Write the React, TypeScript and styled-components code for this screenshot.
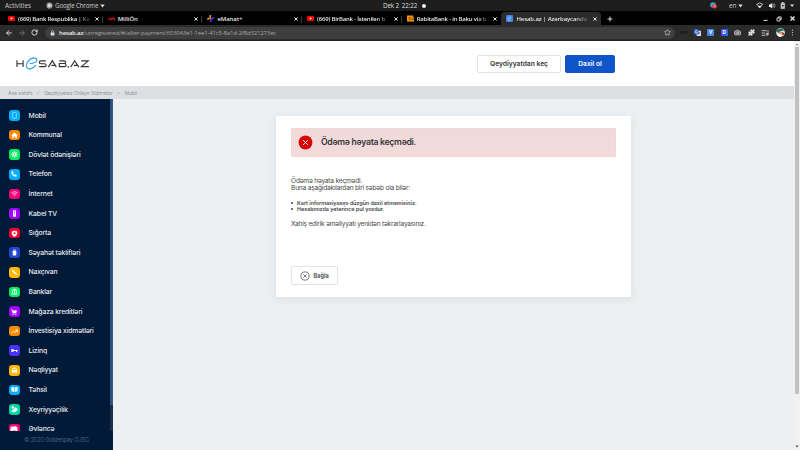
import React from 'react';
import styled, { createGlobalStyle, css } from 'styled-components';
import {
  Smartphone, Settings, Phone, Wifi, Luggage, Landmark, ShoppingCart, TrendingUp,
  BookOpen, HandCoins, Gamepad2, ArrowLeft, ArrowRight, RotateCw, Star, Puzzle,
  ListMusic, Camera, Infinity as InfinityIcon,
} from 'lucide-react';

const Global = createGlobalStyle`
  * { box-sizing: border-box; }
  body { margin: 0; overflow: hidden; }
  #root { width: 800px; height: 450px; }
  svg { display: block; flex: none; }
`;

const Screen = styled.div`
  width: 800px;
  height: 450px;
  display: flex;
  flex-direction: column;
  overflow: hidden;
  font-family: Inter, "Liberation Sans", sans-serif;
  white-space: nowrap;
`;

const SystemBar = styled.div`
  height: 11px;
  flex: none;
  background: #1d1d1d;
  color: #c9c9c9;
  display: grid;
  grid-template-columns: 383px 1fr 94px;
  align-items: center;
  font: 6.3px/11px "Open Sans", "Noto Sans", sans-serif;
`;
const SystemLeft = styled.div`
  display: flex;
  align-items: center;
  padding-left: 5px;
`;
const Activities = styled.span`
  width: 41px;
`;
const AppName = styled.span`
  margin: 0 2px 0 2px;
  letter-spacing: -0.2px;
`;
const Clock = styled.div`
  display: flex;
  align-items: center;
  gap: 5px;
  color: #dedede;
  letter-spacing: -0.15px;
`;
const Dot = styled.i`
  width: 4px;
  height: 4px;
  border-radius: 50%;
  background: #f2f2f2;
`;
const Tray = styled.div`
  display: flex;
  align-items: center;
  padding-left: 4px;
`;
const TrayText = styled.span`
  margin: 0 2px 0 12px;
`;

const TabStrip = styled.div`
  height: 14px;
  flex: none;
  background: #000;
  display: flex;
  padding: 1px 0 0 3px;
`;
const TabBox = styled.div<{ $active?: boolean; $divided?: boolean }>`
  width: 99.7px;
  height: 13px;
  flex: none;
  display: flex;
  align-items: center;
  padding: 0 4px 0 5px;
  border-radius: 4px 4px 0 0;
  color: #e4e4e4;
  font: 600 6px/12px "Open Sans", "Noto Sans", sans-serif;
  background: ${p => (p.$active ? '#2b2b2b' : 'transparent')};
  ${p => p.$divided && css`
    background: linear-gradient(#3a3a3a, #3a3a3a) right 4px / 1px 7px no-repeat;
  `}
`;
const TabTitle = styled.span<{ $fade?: boolean; $spacing: number }>`
  width: 75px;
  margin: 0 1.5px 0 3px;
  flex: none;
  letter-spacing: ${p => p.$spacing}px;
  ${p => p.$fade && css`mask-image: linear-gradient(90deg, #000 78%, transparent 100%);`}
`;
const StripSpacer = styled.div`
  flex: 1;
`;
const PlusSlot = styled.div`
  display: flex;
  align-items: center;
  padding-left: 6px;
`;
const WindowControls = styled.div`
  display: flex;
  align-items: center;
  gap: 8px;
  padding-right: 5px;
`;

const Toolbar = styled.div`
  height: 16px;
  flex: none;
  background: #2b2b2b;
  border-bottom: 1px solid #202124;
  display: flex;
  align-items: center;
  padding: 0 6px 0 5px;
  color: #d4d4d4;
`;
const NavButtons = styled.div`
  width: 40px;
  display: flex;
  align-items: center;
  gap: 5px;
`;
const AddressBar = styled.div`
  width: 630px;
  height: 12px;
  flex: none;
  border-radius: 6px;
  background: #3e3e3e;
  display: flex;
  align-items: center;
  padding: 0 4px 0 5px;
  font: 6.1px/12px "Open Sans", "Noto Sans", sans-serif;
  color: #a2a2a2;
`;
const Url = styled.span`
  flex: 1;
  margin-left: 4px;
  letter-spacing: -0.21px;
`;
const Host = styled.b`
  font-weight: 600;
  color: #ececec;
`;
const Extensions = styled.div`
  flex: 1;
  display: flex;
  justify-content: space-between;
  align-items: center;
  padding-left: 5px;
`;
const Extension = styled.span<{ $bg: string }>`
  width: 7px;
  height: 7px;
  border-radius: 1px;
  background: ${p => p.$bg};
  color: #fff;
  font: 700 5px/7px "Open Sans", sans-serif;
  text-align: center;
`;

const Viewport = styled.div`
  flex: 1;
  display: flex;
  min-height: 0;
`;
const Page = styled.div`
  width: 794px;
  display: flex;
  flex-direction: column;
`;
const ScrollTrack = styled.div`
  width: 6px;
  background: #f1f1f1;
  display: flex;
  flex-direction: column;
  align-items: center;
  padding: 2px 0;
`;
const ScrollThumb = styled.div`
  width: 4px;
  height: 347px;
  margin: 1px 0 auto;
  background: #c1c1c1;
`;

const SiteHeader = styled.header`
  height: 45px;
  flex: none;
  background: #fff;
  display: flex;
  align-items: flex-start;
  padding: 13.5px 0 0 16px;
`;
const HeaderButtons = styled.div`
  display: flex;
  gap: 4px;
  margin: 0.5px 0 0 386px;
`;
const Button = styled.button<{ $primary?: boolean }>`
  width: ${p => (p.$primary ? 50 : 84)}px;
  height: 18px;
  padding: 0 0 1px;
  border-radius: 2px;
  border: 1px solid ${p => (p.$primary ? '#0f55c9' : '#e3e4e6')};
  background: ${p => (p.$primary ? '#0f55c9' : '#fff')};
  color: ${p => (p.$primary ? '#fff' : '#343434')};
  font: 600 6.7px/14px Inter, sans-serif;
`;
const Breadcrumb = styled.nav`
  height: 13px;
  flex: none;
  background: #dce0e3;
  display: flex;
  align-items: center;
  padding-left: 8px;
  color: #8f9498;
  font-size: 5px;
  letter-spacing: -0.13px;
`;
const Crumb = styled.span<{ $w?: number; $spacing?: number }>`
  width: ${p => (p.$w ? `${p.$w}px` : 'auto')};
  letter-spacing: ${p => p.$spacing ?? -0.13}px;
`;
const Chevron = styled.span`
  width: 7px;
`;

const Body = styled.div`
  flex: 1;
  min-height: 0;
  display: flex;
  background: #ecf0f3;
`;
const Sidebar = styled.aside`
  width: 112.7px;
  flex: none;
  background: #021a38;
  display: flex;
  flex-direction: column;
`;
const MenuArea = styled.div`
  height: 332px;
  display: flex;
  justify-content: space-between;
  overflow: hidden;
`;
const Menu = styled.ul`
  list-style: none;
  margin: 0;
  padding: 6.8px 0 0 9px;
`;
const MenuItem = styled.li`
  height: 19.6px;
  display: flex;
  align-items: center;
  gap: 9px;
  color: #e6eaef;
  font-size: 6.8px;
  line-height: 10px;
  font-weight: 500;
`;
const Badge = styled.span<{ $color: string }>`
  width: 10.6px;
  height: 10.6px;
  flex: none;
  border-radius: 3.2px;
  background: ${p => p.$color};
  color: #fff;
  display: grid;
  place-items: center;
`;
const MenuText = styled.span`
  letter-spacing: -0.15px;
`;
const MenuTrack = styled.div`
  width: 2.4px;
  background: #1a2f4a;
`;
const MenuThumb = styled.div`
  height: 306px;
  background: linear-gradient(90deg, #244973, #34608f);
`;
const Copyright = styled.footer`
  padding-left: 24px;
  color: #4c6280;
  font-size: 5.7px;
  line-height: 18px;
  letter-spacing: -0.17px;
`;

const Card = styled.main`
  width: 354.6px;
  height: 181px;
  margin: 17px 0 0 163.4px;
  padding: 12px 15px 0;
  background: #fff;
  border-radius: 1px;
  box-shadow: 0 2px 9px rgba(70, 90, 110, 0.11);
  color: #484848;
  font-size: 6.6px;
  line-height: 7px;
  letter-spacing: -0.21px;
`;
const Alert = styled.div`
  height: 29px;
  border: 1px solid #f0d6d7;
  border-radius: 1px;
  background: #f3dada;
  display: flex;
  align-items: center;
  gap: 8.4px;
  padding-left: 5.5px;
`;
const AlertTitle = styled.h1`
  margin: 0 0 1px;
  color: #363636;
  font-size: 8.7px;
  line-height: 12px;
  font-weight: 600;
  letter-spacing: -0.3px;
`;
const Intro = styled.p`
  margin: 21px 0 0;
`;
const Reasons = styled.ul`
  list-style: none;
  margin: 8px 0 0;
  padding: 0;
  font-size: 5.4px;
  line-height: 6px;
  font-weight: 600;
`;
const Reason = styled.li<{ $spacing: number }>`
  display: flex;
  align-items: center;
  gap: 4px;
  letter-spacing: ${p => p.$spacing}px;
  &::before {
    content: '';
    width: 2px;
    height: 2px;
    border-radius: 50%;
    background: #444;
  }
`;
const Retry = styled.p`
  margin: 9px 0 0;
`;
const CloseButton = styled.button`
  width: 46.5px;
  height: 19px;
  margin-top: 38px;
  padding: 0 0 0 7.5px;
  display: flex;
  align-items: center;
  gap: 4px;
  border: 1px solid #e2e3e5;
  border-radius: 2px;
  background: #fff;
  color: #5a5a5a;
  font: 700 5.6px/8px Inter, sans-serif;
`;

const Caret = () => <svg width="5" height="4" viewBox="0 0 5 4"><path d="M.3.5h4.4L2.5 3.5z" fill="#ddd" /></svg>;
const Cross = ({ s = 4 }: { s?: number }) => (
  <svg width={s} height={s} viewBox="0 0 4 4" stroke="#eee" strokeWidth=".95"><path d="M.4.4l3.2 3.2M3.6.4L.4 3.6" /></svg>
);
const YouTube = () => (
  <svg width="7" height="7" viewBox="0 0 7 7"><rect y="1" width="7" height="5" rx="1.2" fill="#f00" /><path d="M2.8 2.3v2.4l2-1.2z" fill="#fff" /></svg>
);
const MillionIcon = () => (
  <svg width="7" height="7" viewBox="0 0 7 7" fill="none" stroke="#d5121f" strokeWidth=".9"><circle cx="1.6" cy="4" r="1.1" /><path d="M3.6 5.5V3h2.8v2.5M5 3v2.5" /></svg>
);
const EManatIcon = () => (
  <svg width="7" height="7" viewBox="0 0 7 7" fill="none" strokeWidth="1.5"><path d="M3.3 0v2.9L.2 4.3" stroke="#ff8a1e" /><path d="M3.9 7V4.2l2.9-1.5" stroke="#5a3bea" /></svg>
);
const RabitaIcon = () => (
  <svg width="7" height="7" viewBox="0 0 7 7"><path d="M0 .5h6v1.3h1v4.7H0z" fill="#f90" /><path d="M4.2 2.4H2.1v2.2h2.1M7 2.9H5.2v1.6H7" stroke="#3b2500" strokeWidth=".6" fill="none" /></svg>
);
const HesabIcon = () => (
  <svg width="7" height="7" viewBox="0 0 7 7"><rect width="7" height="7" rx="1" fill="#3f83e6" /><path d="M2 4.1L5 2.7C4.5 1 2 1.7 1.7 3.8c0 2 2 2 3.3 1" fill="none" stroke="#bcd7ff" strokeWidth=".6" /></svg>
);
const ChromeIcon = () => (
  <svg width="7" height="7" viewBox="0 0 7 7"><circle cx="3.5" cy="3.5" r="3.1" fill="#a8a8a8" /><path d="M3.5 2h3M2.2 4.3L.9 2M4.8 4.3L3.5 6.6" stroke="#555" strokeWidth=".5" /><circle cx="3.5" cy="3.5" r="1.3" fill="#eee" /></svg>
);
const Lock = () => (
  <svg width="5" height="6" viewBox="0 0 5 6"><rect x=".6" y="2.4" width="3.8" height="3" rx=".3" fill="#ddd" /><path d="M1.5 2.5v-.9a1 1 0 012 0v.9" stroke="#ddd" strokeWidth=".7" fill="none" /></svg>
);
const TranslateIcon = () => (
  <svg width="7" height="7" viewBox="0 0 7 7"><rect x="2.6" y="1.8" width="4.4" height="5.2" rx=".5" fill="#dce3ec" /><path d="M0 0h4l1.3 5.3H0z" fill="#3568dc" /><path d="M3.3 2.2a1.2 1.2 0 10.2 1.2h-1" stroke="#fff" strokeWidth=".6" fill="none" /><path d="M4.8 3.4h1.8M5.7 3v.4c0 1-.5 1.7-1 2" stroke="#697b94" strokeWidth=".5" fill="none" /></svg>
);
const Avatar = () => (
  <svg width="9" height="9" viewBox="0 0 9 9"><circle cx="4.5" cy="4.5" r="4.4" fill="#dbe7df" /><path d="M.2 4C1 .2 6-.9 8.3 2.5L5 3 3.5 5z" fill="#27685a" /><circle cx="4.2" cy="4.6" r="1.5" fill="#c98e72" /><path d="M6 4l2.7 1.2L7 7.5 5.5 6z" fill="#b53e35" /><path d="M1 6.5L4 6l1 2.8C3 9 2 8.5 1 6.5z" fill="#fff" /></svg>
);

const SiteLogo = () => (
  <svg width="75" height="17" viewBox="0 0 76.2 17" preserveAspectRatio="none">
    <g fill="none" stroke="#333" strokeWidth="1.15">
      <path d="M1 5.3v6.8M7.2 5.3v6.8M1 8.7h6.2" />
      <path d="M30.3 5.9H25.4q-1.8 0-1.8 1.3T25.4 8.7h3.4q1.8 0 1.8 1.5t-1.8 1.4h-5.3" />
      <path d="M32.9 12.1l4-6.4 4.1 6.4M36 10.4h3.6" />
      <path d="M44 5.9h4.8q1.6 0 1.6 1.3t-1.6 1.3H44m4.8 0q2.1 0 2.1 1.6t-2 1.5H44V8" />
      <path d="M53.1 11.1v1.6" />
      <path d="M55.6 12.1l4-6.4 4.2 6.4M58.8 10.4h3.6" />
      <path d="M66.3 5.9h7l-6.8 5.7h7.6" />
    </g>
    <path d="M14.2 8.5c3.5.1 6.8-1.3 7-3.4.1-2.3-3.6-2.7-6.5-.8C11.6 6.2 9.5 9.9 11 12.6c1.6 2.7 6.1 1.4 9.2-2.5" fill="none" stroke="#2396e9" strokeWidth="1.05" />
    <path d="M11.4 7.5C12.3 5 15 2.8 18.3 2.6M10.9 11.2c.2 2.3 2 3.5 4.6 2.6" fill="none" stroke="#46aaf2" strokeWidth=".7" />
  </svg>
);

const PhoneIcon = () => <svg width="7" height="7" viewBox="0 0 7 7"><rect x="1.6" y=".5" width="3.8" height="6" rx=".7" fill="none" stroke="#a9e6ff" strokeWidth=".7" /><path d="M3 5.5h1" stroke="#a9e6ff" strokeWidth=".5" /></svg>;
const HomeIcon = () => <svg width="7" height="7" viewBox="0 0 7 7"><path d="M3.5.5l3.2 2.8h-.8v3H4.3V4.4H2.7v1.9H1.1v-3H.3z" fill="#fff" /></svg>;
const GearIcon = () => <svg width="7" height="7" viewBox="0 0 7 7"><circle cx="3.5" cy="3.5" r="1.6" fill="none" stroke="#fff" strokeWidth="1.3" /><path d="M3.5.3v1M3.5 5.7v1M.3 3.5h1M5.7 3.5h1M1.2 1.2l.8.8M5 5l.8.8M5.8 1.2L5 2M2 5l-.8.8" stroke="#fff" strokeWidth="1" /></svg>;
const RemoteIcon = () => <svg width="7" height="7" viewBox="0 0 7 7"><rect x="2" y=".3" width="3" height="6.4" rx=".7" fill="#fff" /><circle cx="3.5" cy="2" r=".7" fill="#a100ff" /><path d="M3 3.8h1M3 5h1" stroke="#a100ff" strokeWidth=".4" /></svg>;
const ShieldIcon = () => <svg width="7" height="7" viewBox="0 0 7 7"><path d="M3.5.4l2.7 1v2.1c0 1.6-1.2 2.6-2.7 3.2C2 6.1.8 5.1.8 3.5V1.4z" fill="#fff" /><circle cx="3.5" cy="3.3" r="1" fill="#f5002f" /></svg>;
const SuitcaseIcon = () => <svg width="7" height="7" viewBox="0 0 7 7"><rect x="1.7" y="1.7" width="3.6" height="4.7" rx=".6" fill="#fff" /><path d="M2.8 1.8V.7h1.4v1.1" stroke="#fff" strokeWidth=".6" fill="none" /></svg>;
const MapIcon = () => <svg width="7" height="7" viewBox="0 0 7 7"><path d="M.5.8l2.4.6 1 1.8 1.7.7.8 2.3-1.8-.6-1.5-1.6-1.4-.7z" fill="#fff" /></svg>;
const BankIcon = () => <svg width="7" height="7" viewBox="0 0 7 7"><path d="M.4 2.6L3.5.6l3.1 2zM.5 5.6h6v.9h-6z" fill="#fff" /><path d="M1.5 3v2.4M3.5 3v2.4M5.5 3v2.4" stroke="#fff" strokeWidth=".9" /></svg>;
const KeyIcon = () => <svg width="7" height="7" viewBox="0 0 7 7"><path d="M.3 2.2h2.1l.5.7h3.8v1.2H6V5H5v-.9H2.9l-.5.6H.3z" fill="#fff" /></svg>;
const TaxiIcon = () => <svg width="7" height="7" viewBox="0 0 7 7"><path d="M2.5.6h2v.7h.8l.9 2v2.8H5.2v-.7H1.8v.7H.8V3.3l.9-2h.8z" fill="#fff" /><path d="M1.7 3l.5-1h2.6l.5 1z" fill="#ffb800" /><circle cx="2" cy="4.3" r=".4" fill="#ffb800" /><circle cx="5" cy="4.3" r=".4" fill="#ffb800" /></svg>;
const BookIcon = () => <svg width="7" height="7" viewBox="0 0 7 7"><path d="M.4 1.3q1.6-.5 2.8.3v4.3q-1.2-.7-2.8-.3zM6.6 1.3Q5 .8 3.8 1.6v4.3q1.2-.7 2.8-.3z" fill="#fff" /></svg>;

const menu: { text: string; color: string; icon: React.ReactNode }[] = [
  { text: 'Mobil', color: '#00b0ff', icon: <PhoneIcon /> },
  { text: 'Kommunal', color: '#ff8a00', icon: <HomeIcon /> },
  { text: 'Dövlət ödənişləri', color: '#00ef62', icon: <GearIcon /> },
  { text: 'Telefon', color: '#00b0ff', icon: <Phone size={6} strokeWidth={1.5} fill="#fff" /> },
  { text: 'İnternet', color: '#ff0078', icon: <Wifi size={7} strokeWidth={3} color="#ffb3d6" /> },
  { text: 'Kabel TV', color: '#a100ff', icon: <RemoteIcon /> },
  { text: 'Sığorta', color: '#f5002f', icon: <ShieldIcon /> },
  { text: 'Səyahət təklifləri', color: '#2147d2', icon: <SuitcaseIcon /> },
  { text: 'Naxçıvan', color: '#ffb800', icon: <MapIcon /> },
  { text: 'Banklar', color: '#00ef62', icon: <BankIcon /> },
  { text: 'Mağaza kreditləri', color: '#a100ff', icon: <ShoppingCart size={6} strokeWidth={2.5} fill="#fff" /> },
  { text: 'İnvestisiya xidmətləri', color: '#ff8a00', icon: <TrendingUp size={7} strokeWidth={3} /> },
  { text: 'Lizinq', color: '#4c32ff', icon: <KeyIcon /> },
  { text: 'Nəqliyyat', color: '#ffb800', icon: <TaxiIcon /> },
  { text: 'Təhsil', color: '#00b0ff', icon: <BookIcon /> },
  { text: 'Xeyriyyəçilik', color: '#00d6a2', icon: <HandCoins size={7} strokeWidth={3} fill="#fff" /> },
  { text: 'Əyləncə', color: '#ff0078', icon: <Gamepad2 size={8} strokeWidth={1.5} fill="#fff" /> },
];

const tabs: { title: string; icon: React.ReactNode; fade?: boolean; spacing: number }[] = [
  { title: '(669) Bank Respublika | Ka', icon: <YouTube />, fade: true, spacing: -0.22 },
  { title: 'MilliÖn', icon: <MillionIcon />, spacing: -0.1 },
  { title: 'eManat+', icon: <EManatIcon />, spacing: -0.1 },
  { title: '(669) BirBank - İstənilən b', icon: <YouTube />, fade: true, spacing: -0.22 },
  { title: 'RabitaBank - in Baku via b', icon: <RabitaIcon />, fade: true, spacing: -0.22 },
  { title: 'Hesab.az | Azərbaycanda', icon: <HesabIcon />, fade: true, spacing: -0.12 },
];

export default function App() {
  return (
    <Screen>
      <Global />
      <SystemBar>
        <SystemLeft>
          <Activities>Activities</Activities>
          <ChromeIcon />
          <AppName>Google Chrome</AppName>
          <Caret />
        </SystemLeft>
        <Clock><span>Dek 2&nbsp; 22:22</span><Dot /></Clock>
        <Tray>
          <svg width="7" height="7" viewBox="0 0 7 7"><circle cx="3" cy="3" r="2.8" fill="#33a5dd" /><circle cx="4.6" cy="4.2" r="2.3" fill="#e83a35" /><path d="M4.2 3.3l.6-.3v2.3" stroke="#fff" strokeWidth=".5" fill="none" /></svg>
          <TrayText>en</TrayText>
          <Caret />
          <svg width="58" height="9" viewBox="0 0 58 9">
            <path d="M13.7 3.2q3-2.4 6 0l-3 3.8z" stroke="#e5e5e5" strokeWidth=".8" fill="none" /><path d="M15 4.8h3.4L16.7 7z" fill="#eee" />
            <path d="M26 3.5h1.3L29.3 2v5.4l-2-1.5H26z" fill="#eee" /><path d="M30.2 3q1.2 1.6 0 3.2M31.2 2.3q1.7 2.3 0 4.6" stroke="#aaa" strokeWidth=".7" fill="none" />
            <path d="M38 2.2h1V1.5h1.6v.7h1v5.3H38z" fill="#bbb" stroke="#eee" strokeWidth=".5" /><path d="M38.7 4h2.2L39.8 6z" fill="#333" />
            <path d="M47 3.4h4.2l-2.1 2.7z" fill="#ddd" />
          </svg>
        </Tray>
      </SystemBar>
      <TabStrip>
        {tabs.map((t, i) => (
          <TabBox key={t.title} $active={i === 5} $divided={i < 4}>
            {t.icon}
            <TabTitle $fade={t.fade} $spacing={t.spacing}>{t.title}</TabTitle>
            <Cross />
          </TabBox>
        ))}
        <PlusSlot><svg width="6" height="6" viewBox="0 0 6 6" stroke="#eee" strokeWidth=".9"><path d="M3 .5v5M.5 3h5" /></svg></PlusSlot>
        <StripSpacer />
        <WindowControls>
          <svg width="5" height="5" viewBox="0 0 5 5"><path d="M.5 4.4h4" stroke="#ddd" /></svg>
          <svg width="6" height="6" viewBox="0 0 6 6" fill="none" stroke="#ddd" strokeWidth=".9"><path d="M1 2h3v3H1zM2.4 2V.9h2.8v2.8H4" /></svg>
          <Cross s={5} />
        </WindowControls>
      </TabStrip>
      <Toolbar>
        <NavButtons>
          <ArrowLeft size={8} strokeWidth={3} />
          <ArrowRight size={8} strokeWidth={2.6} color="#777" />
          <RotateCw size={7} strokeWidth={3.4} />
        </NavButtons>
        <AddressBar>
          <Lock />
          <Url><Host>hesab.az</Host>/unregistered/#/after-payment/603043e1-1ee1-41c5-8a1d-2f8d321273ec</Url>
          <Star size={7} strokeWidth={2.3} color="#ccc" />
        </AddressBar>
        <Extensions>
          <InfinityIcon size={7} strokeWidth={3} color="#151515" />
          <TranslateIcon />
          <Extension $bg="#4a86e8">V</Extension>
          <Extension $bg="linear-gradient(90deg, #5d35ff, #1478ff)">D</Extension>
          <Camera size={7} strokeWidth={3} color="#bbb" fill="#777" />
          <Puzzle size={7} strokeWidth={2} fill="#ddd" color="#ddd" />
          <ListMusic size={8} strokeWidth={2.7} color="#ccc" />
          <Avatar />
          <svg width="3" height="7" viewBox="0 0 3 7" fill="#ccc"><circle cx="1.5" cy="1.2" r=".6" /><circle cx="1.5" cy="3.5" r=".6" /><circle cx="1.5" cy="5.8" r=".6" /></svg>
        </Extensions>
      </Toolbar>
      <Viewport>
        <Page>
          <SiteHeader>
            <SiteLogo />
            <HeaderButtons>
              <Button>Qeydiyyatdan keç</Button>
              <Button $primary>Daxil ol</Button>
            </HeaderButtons>
          </SiteHeader>
          <Breadcrumb>
            <Crumb $w={29} $spacing={-0.07}>Ana səhifə</Crumb><Chevron>›</Chevron>
            <Crumb $w={73.5}>Qeydiyyatsız Onlayn Xidmətlər</Crumb><Chevron>›</Chevron>
            <Crumb>Mobil</Crumb>
          </Breadcrumb>
          <Body>
            <Sidebar>
              <MenuArea>
                <Menu>
                  {menu.map(m => (
                    <MenuItem key={m.text}>
                      <Badge $color={m.color}>{m.icon}</Badge>
                      <MenuText>{m.text}</MenuText>
                    </MenuItem>
                  ))}
                </Menu>
                <MenuTrack><MenuThumb /></MenuTrack>
              </MenuArea>
              <Copyright>© 2020 Goldenpay OJSC</Copyright>
            </Sidebar>
            <Card>
              <Alert>
                <svg width="15" height="15" viewBox="0 0 15 15"><circle cx="7.5" cy="7.5" r="6.9" fill="#da0000" /><path d="M5 5l5 5M10 5l-5 5" stroke="#fff" strokeWidth=".9" /></svg>
                <AlertTitle>Ödəmə həyata keçmədi.</AlertTitle>
              </Alert>
              <Intro>Ödəmə həyata keçmədi.<br />Buna aşağıdakılardan biri səbəb ola bilər:</Intro>
              <Reasons>
                <Reason $spacing={-0.04}>Kart informasiyasını düzgün daxil etməmisiniz.</Reason>
                <Reason $spacing={-0.03}>Hesabınızda yetərincə pul yoxdur.</Reason>
              </Reasons>
              <Retry>Xahiş edirik əməliyyatı yenidən təkrarlayasınız.</Retry>
              <CloseButton>
                <svg width="10" height="10" viewBox="0 0 10 10" fill="none" stroke="#555" strokeWidth=".8"><circle cx="5" cy="5" r="4.1" /><path d="M3.3 3.3l3.4 3.4M6.7 3.3L3.3 6.7" /></svg>
                Bağla
              </CloseButton>
            </Card>
          </Body>
        </Page>
        <ScrollTrack>
          <svg width="4" height="3" viewBox="0 0 4 3"><path d="M.6 2.3L2 .8l1.4 1.5z" fill="#777" /></svg>
          <ScrollThumb />
          <svg width="4" height="3" viewBox="0 0 4 3"><path d="M.4.6h3.2L2 2.4z" fill="#444" /></svg>
        </ScrollTrack>
      </Viewport>
    </Screen>
  );
}
